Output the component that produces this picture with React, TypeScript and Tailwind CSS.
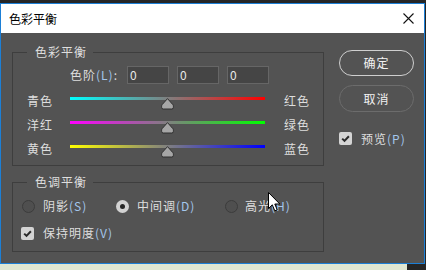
import React from "react";

const font = { fontFamily: '"Noto Sans CJK SC", "Noto Sans", sans-serif' };

function Mn({ children }: { children: React.ReactNode }) {
  return <span className="text-[#a4c6ec]">{children}</span>;
}

function Thumb() {
  return (
    <svg width="13" height="12" viewBox="0 0 13 12" className="absolute left-[91px] top-[1px]">
      <path
        d="M6.5 0.6 L11.8 6.6 Q12.4 7.3 12.4 8.2 L12.4 9.3 Q12.4 11 10.8 11 L2.2 11 Q0.6 11 0.6 9.3 L0.6 8.2 Q0.6 7.3 1.2 6.6 Z"
        fill="#a6a6a6"
        stroke="#2e2e2e"
        strokeWidth="1"
      />
    </svg>
  );
}

function SliderRow({ left, right, grad }: { left: string; right: string; grad: string }) {
  return (
    <div className="flex h-[24px] pl-[14px]">
      <div className="w-[43px] leading-[20px]">{left}</div>
      <div className="relative mt-[6px] h-[3px] w-[195px]" style={{ background: grad }}>
        <Thumb />
      </div>
      <div className="ml-[19px] leading-[20px]">{right}</div>
    </div>
  );
}

function Check() {
  return (
    <div className="flex h-[13px] w-[13px] items-center justify-center rounded-[2px] bg-[#d4d4d4]">
      <svg width="11" height="11" viewBox="0 0 11 11">
        <path d="M2.2 5.6 L4.5 7.9 L8.9 3.2" fill="none" stroke="#2a2a2a" strokeWidth="2" />
      </svg>
    </div>
  );
}

function Radio({ on }: { on?: boolean }) {
  return on ? (
    <div className="flex h-[13px] w-[13px] items-center justify-center rounded-full bg-[#d2d2d2]">
      <div className="h-[5px] w-[5px] rounded-full bg-[#262626]" />
    </div>
  ) : (
    <div className="h-[13px] w-[13px] rounded-full border-[1.5px] border-[#3c3c3c] bg-[#4f4f4f]" />
  );
}

function NumBox() {
  return (
    <div className="flex h-[18px] w-[42px] items-center border border-[#666666] bg-[#454545] pl-[2px] text-[12px] leading-none text-[#e8e8e8]">
      0
    </div>
  );
}

export default function App() {
  return (
    <div className="relative h-[270px] w-[426px] overflow-hidden bg-[#262626] pt-[3px]" style={font}>
      <div className="flex h-[261px] w-[425px] flex-col border border-[#1c7fd6]">
        <div className="flex h-[29px] items-center justify-between bg-white pl-[8px] pr-[10px] text-[12px] text-black">
          <span>色彩平衡</span>
          <svg width="11" height="11" viewBox="0 0 11 11">
            <path d="M0.5 0.5 L10.5 10.5 M10.5 0.5 L0.5 10.5" stroke="#111" strokeWidth="1.1" />
          </svg>
        </div>
        <div className="flex flex-1 bg-[#535353] pl-[11px] text-[12px] tracking-[1px] text-[#dedede]">
          <div className="w-[312px]">
            <div className="relative mt-[19px] border border-[#3e3e3e] pb-[2px]">
              <div className="absolute left-[14px] top-[-9px] bg-[#535353] pl-[8px] pr-[6px] leading-[16px]">色彩平衡</div>
              <div className="mt-[13px] flex h-[18px] items-center">
                <div className="w-[114px] pl-[57px]">
                  色阶<Mn>(L)</Mn>:
                </div>
                <div className="flex gap-[8px]">
                  <NumBox />
                  <NumBox />
                  <NumBox />
                </div>
              </div>
              <div className="mt-[7px]">
                <SliderRow left="青色" right="红色" grad="linear-gradient(to right, #00ffff, #ff0000)" />
                <SliderRow left="洋红" right="绿色" grad="linear-gradient(to right, #ff00ff, #00ff00)" />
                <SliderRow left="黄色" right="蓝色" grad="linear-gradient(to right, #ffff00, #0000ff)" />
              </div>
            </div>
            <div className="relative mt-[16px] border border-[#3e3e3e] pb-[8px]">
              <div className="absolute left-[14px] top-[-9px] bg-[#535353] pl-[8px] pr-[6px] leading-[16px]">色调平衡</div>
              <div className="mt-[13px] flex h-[20px] items-center pl-[9px]">
                <div className="flex w-[94px] items-center">
                  <Radio />
                  <span className="ml-[8px]">
                    阴影<Mn>(S)</Mn>
                  </span>
                </div>
                <div className="flex w-[109px] items-center">
                  <Radio on />
                  <span className="ml-[8px]">
                    中间调<Mn>(D)</Mn>
                  </span>
                </div>
                <div className="flex items-center">
                  <Radio />
                  <span className="ml-[7px]">
                    高光<Mn>(H)</Mn>
                  </span>
                </div>
              </div>
              <div className="mt-[7px] flex h-[20px] items-center pl-[8px]">
                <Check />
                <span className="ml-[9px]">
                  保持明度<Mn>(V)</Mn>
                </span>
              </div>
            </div>
          </div>
          <div className="ml-[15px] mt-[17px] flex w-[75px] flex-col">
            <div className="flex h-[26px] items-center justify-center rounded-full border-[1.5px] border-[#cfcfcf] text-[#f2f2f2]">
              确定
            </div>
            <div className="mt-[9px] flex h-[27px] items-center justify-center rounded-full border-[1.5px] border-[#6c6c6c] text-[#f2f2f2]">
              取消
            </div>
            <div className="mt-[20px] flex h-[13px] items-center">
              <Check />
              <span className="ml-[9px]">
                预览<Mn>(P)</Mn>
              </span>
            </div>
          </div>
        </div>
      </div>
      <div className="flex h-[6px]">
        <div className="w-[407px] bg-[#e0e7d2]" />
        <div className="flex-1 bg-[#262626]" />
      </div>
      <svg width="13" height="21" viewBox="0 0 13 21" className="absolute left-[268px] top-[192px]">
        <path
          d="M0.5 0.5 L0.5 16.5 L4.3 12.8 L6.8 18.8 L9.2 17.8 L6.8 12 L11.8 12 Z"
          fill="#ffffff"
          stroke="#000000"
          strokeWidth="1"
          strokeLinejoin="round"
        />
      </svg>
    </div>
  );
}
